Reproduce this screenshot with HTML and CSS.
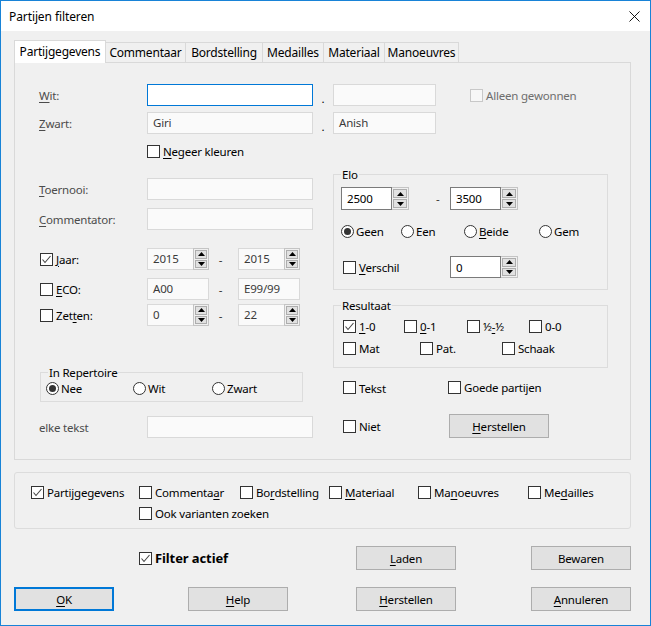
FILE: index.html
```html
<!DOCTYPE html>
<html lang="nl">
<head>
<meta charset="utf-8">
<title>Partijen filteren</title>
<link rel="stylesheet" href="styles.css">
</head>
<body>
<div class="window">
  <div class="titlebar">
    <span class="title">Partijen filteren</span>
    <svg class="close" width="12" height="12" viewBox="0 0 12 12"><path d="M0.5 0.5 L11.5 11.5 M11.5 0.5 L0.5 11.5" stroke="#000" stroke-width="1"/></svg>
  </div>
  <div class="body">
    <div class="tabs">
      <div class="tab active t1">Partijgegevens</div>
      <div class="tab t2">Commentaar</div>
      <div class="tab t3">Bordstelling</div>
      <div class="tab t4">Medailles</div>
      <div class="tab t5">Materiaal</div>
      <div class="tab t6">Manoeuvres</div>
    </div>
    <div class="panel">
      <div class="row r-wit">
        <span class="lbl"><u>W</u>it:</span>
        <div class="input focus"></div>
        <span class="dot">.</span>
        <div class="input short"></div>
        <span class="chk disabled alleen"><span class="box"></span><span class="txt">Alleen gewonnen</span></span>
      </div>
      <div class="row r-zwart">
        <span class="lbl"><u>Z</u>wart:</span>
        <div class="input">Giri</div>
        <span class="dot">.</span>
        <div class="input short">Anish</div>
      </div>
      <div class="row r-negeer">
        <span class="chk"><span class="box"></span><span class="txt"><u>N</u>egeer kleuren</span></span>
      </div>

      <div class="cols">
        <div class="col-left">
          <div class="row r-toernooi">
            <span class="lbl"><u>T</u>oernooi:</span>
            <div class="input"></div>
          </div>
          <div class="row r-comm">
            <span class="lbl"><u>C</u>ommentator:</span>
            <div class="input"></div>
          </div>
          <div class="row r-jaar">
            <span class="chk lblchk"><span class="box on"><svg viewBox="0 0 11 11"><path d="M1.5 5.5 L4 8.5 L9.5 2" fill="none" stroke="#444" stroke-width="1.1"/></svg></span><span class="txt"><u>J</u>aar:</span></span>
            <div class="spin light"><div class="edit">2015</div><div class="updown"><span class="b"><svg viewBox="0 0 7 4"><path d="M0 4 L3.5 0 L7 4Z"/></svg></span><span class="b"><svg viewBox="0 0 7 4"><path d="M0 0 L7 0 L3.5 4Z"/></svg></span></div></div>
            <span class="dash">-</span>
            <div class="spin light"><div class="edit">2015</div><div class="updown"><span class="b"><svg viewBox="0 0 7 4"><path d="M0 4 L3.5 0 L7 4Z"/></svg></span><span class="b"><svg viewBox="0 0 7 4"><path d="M0 0 L7 0 L3.5 4Z"/></svg></span></div></div>
          </div>
          <div class="row r-eco">
            <span class="chk lblchk"><span class="box"></span><span class="txt"><u>E</u>CO:</span></span>
            <div class="input small">A00</div>
            <span class="dash">-</span>
            <div class="input small">E99/99</div>
          </div>
          <div class="row r-zetten">
            <span class="chk lblchk"><span class="box"></span><span class="txt">Zet<u>t</u>en:</span></span>
            <div class="spin light"><div class="edit">0</div><div class="updown"><span class="b"><svg viewBox="0 0 7 4"><path d="M0 4 L3.5 0 L7 4Z"/></svg></span><span class="b"><svg viewBox="0 0 7 4"><path d="M0 0 L7 0 L3.5 4Z"/></svg></span></div></div>
            <span class="dash">-</span>
            <div class="spin light"><div class="edit">22</div><div class="updown"><span class="b"><svg viewBox="0 0 7 4"><path d="M0 4 L3.5 0 L7 4Z"/></svg></span><span class="b"><svg viewBox="0 0 7 4"><path d="M0 0 L7 0 L3.5 4Z"/></svg></span></div></div>
          </div>
          <div class="group repertoire">
            <span class="legend">In Repertoire</span>
            <span class="radio on r-nee"><span class="circle"></span><span class="txt">Nee</span></span>
            <span class="radio r-wit2"><span class="circle"></span><span class="txt">Wit</span></span>
            <span class="radio"><span class="circle"></span><span class="txt">Zwart</span></span>
          </div>
          <div class="row r-elke">
            <span class="lbl">elke tekst</span>
            <div class="input"></div>
          </div>
        </div>

        <div class="col-right">
          <div class="group elo">
            <span class="legend">Elo</span>
            <div class="grow g-spin">
              <div class="spin dark"><div class="edit">2500</div><div class="updown"><span class="b"><svg viewBox="0 0 7 4"><path d="M0 4 L3.5 0 L7 4Z"/></svg></span><span class="b"><svg viewBox="0 0 7 4"><path d="M0 0 L7 0 L3.5 4Z"/></svg></span></div></div>
              <span class="edash">-</span>
              <div class="spin dark"><div class="edit">3500</div><div class="updown"><span class="b"><svg viewBox="0 0 7 4"><path d="M0 4 L3.5 0 L7 4Z"/></svg></span><span class="b"><svg viewBox="0 0 7 4"><path d="M0 0 L7 0 L3.5 4Z"/></svg></span></div></div>
            </div>
            <div class="grow g-radio">
              <span class="radio on w60"><span class="circle"></span><span class="txt">Geen</span></span>
              <span class="radio w63"><span class="circle"></span><span class="txt">Een</span></span>
              <span class="radio w75"><span class="circle"></span><span class="txt"><u>B</u>eide</span></span>
              <span class="radio"><span class="circle"></span><span class="txt">Gem</span></span>
            </div>
            <div class="grow g-versch">
              <span class="chk w107"><span class="box"></span><span class="txt"><u>V</u>erschil</span></span>
              <div class="spin dark"><div class="edit">0</div><div class="updown"><span class="b"><svg viewBox="0 0 7 4"><path d="M0 4 L3.5 0 L7 4Z"/></svg></span><span class="b"><svg viewBox="0 0 7 4"><path d="M0 0 L7 0 L3.5 4Z"/></svg></span></div></div>
            </div>
          </div>

          <div class="group resultaat">
            <span class="legend">Resultaat</span>
            <div class="grow g-res1">
              <span class="chk w61"><span class="box on"><svg viewBox="0 0 11 11"><path d="M1.5 5.5 L4 8.5 L9.5 2" fill="none" stroke="#444" stroke-width="1.1"/></svg></span><span class="txt"><u>1</u>-0</span></span>
              <span class="chk w63"><span class="box"></span><span class="txt"><u>0</u>-1</span></span>
              <span class="chk w62"><span class="box"></span><span class="txt">½<u>-</u>½</span></span>
              <span class="chk"><span class="box"></span><span class="txt">0-0</span></span>
            </div>
            <div class="grow g-res2">
              <span class="chk w77"><span class="box"></span><span class="txt">Mat</span></span>
              <span class="chk w82"><span class="box"></span><span class="txt">Pat.</span></span>
              <span class="chk"><span class="box"></span><span class="txt">Schaak</span></span>
            </div>
          </div>

          <div class="grow g-tekst">
            <span class="chk w105 lower"><span class="box"></span><span class="txt">Tekst</span></span>
            <span class="chk"><span class="box"></span><span class="txt">Goede partijen</span></span>
          </div>
          <div class="grow g-niet">
            <span class="chk w106"><span class="box"></span><span class="txt">Niet</span></span>
            <span class="btn"><u>H</u>erstellen</span>
          </div>
        </div>
      </div>
    </div>

    <div class="search">
      <div class="srow">
        <span class="chk s108"><span class="box on"><svg viewBox="0 0 11 11"><path d="M1.5 5.5 L4 8.5 L9.5 2" fill="none" stroke="#444" stroke-width="1.1"/></svg></span><span class="txt">Partijgegevens</span></span>
        <span class="chk s101"><span class="box"></span><span class="txt">Commenta<u>a</u>r</span></span>
        <span class="chk s89"><span class="box"></span><span class="txt">Bo<u>r</u>dstelling</span></span>
        <span class="chk s89"><span class="box"></span><span class="txt"><u>M</u>ateriaal</span></span>
        <span class="chk s110"><span class="box"></span><span class="txt">Ma<u>n</u>oeuvres</span></span>
        <span class="chk"><span class="box"></span><span class="txt">Me<u>d</u>ailles</span></span>
      </div>
      <div class="srow srow2">
        <span class="chk"><span class="box"></span><span class="txt">Ook varianten zoeken</span></span>
      </div>
    </div>

    <div class="actions">
      <span class="chk filter"><span class="box on"><svg viewBox="0 0 11 11"><path d="M1.5 5.5 L4 8.5 L9.5 2" fill="none" stroke="#444" stroke-width="1.1"/></svg></span><span class="txt">Filter actief</span></span>
      <span class="btn a-laden"><u>L</u>aden</span>
      <span class="btn a-bewaren">Bewaren</span>
      <span class="btn default a-ok"><u>O</u>K</span>
      <span class="btn a-help"><u>H</u>elp</span>
      <span class="btn a-herst"><u>H</u>erstellen</span>
      <span class="btn a-annul"><u>A</u>nnuleren</span>
    </div>
  </div>
</div>
</body>
</html>
```

FILE: styles.css
```css
* { box-sizing: border-box; }
html, body { margin: 0; padding: 0; }
body {
  width: 651px;
  height: 626px;
  overflow: hidden;
  background: #f0f0f0;
  font-family: "Segoe UI", "Noto Sans", "Liberation Sans", sans-serif;
  font-size: 11.5px;
  letter-spacing: -0.2px;
  line-height: 15px;
  color: #000;
}
u { text-decoration: underline; text-underline-offset: 2px; text-decoration-thickness: 1px; }

.window {
  width: 651px;
  height: 626px;
  border: 1px solid #1883d7;
  background: #f0f0f0;
  display: flex;
  flex-direction: column;
}
.titlebar {
  height: 30px;
  flex: none;
  background: #fff;
  display: flex;
  align-items: center;
  justify-content: space-between;
  padding: 0 10px 0 8px;
}
.title { font-size: 12px; letter-spacing: -0.1px; }
.close { display: block; width: 11px; height: 11px; }

.body { padding: 9px 19px 0 13px; }

/* tabs */
.tabs { display: flex; align-items: flex-end; height: 22px; position: relative; z-index: 1; }
.tab {
  height: 20px;
  background: #f0f0f0;
  border: 1px solid #d9d9d9;
  border-left: none;
  border-bottom: none;
  text-align: center;
  padding-top: 2px;
  line-height: 15px;
  white-space: nowrap;
  font-size: 12px;
  letter-spacing: -0.2px;
}
.tab.active {
  height: 23px;
  margin-bottom: -1px;
  background: #fff;
  border: 1px solid #d9d9d9;
  border-bottom: none;
  padding-top: 3px;
}
.t1 { width: 92px; }
.t2 { width: 80px; }
.t3 { width: 77px; }
.t4 { width: 61px; }
.t5 { width: 61px; }
.t6 { width: 74px; }

.panel {
  height: 398px;
  border: 1px solid #d9d9d9;
  padding: 21px 0 0 24px;
}

.row { display: flex; align-items: center; height: 22px; }
.lbl { width: 108px; flex: none; color: #4b4b4b; }
.input {
  width: 166px;
  height: 22px;
  flex: none;
  background: #fafafa;
  border: 1px solid #d9d9d9;
  padding: 2px 0 0 5px;
  color: #3a3a3a;
}
.input.focus { border-color: #0078d7; background: #fff; }
.input.short { width: 103px; }
.input.small { width: 62px; }
.dot { width: 20px; flex: none; text-align: center; align-self: flex-end; color: #000; line-height: 14px; }

.r-zwart { margin-top: 6px; }
.r-negeer { margin-top: 11px; height: 13px; padding-left: 108px; }

/* checkbox */
.chk { display: inline-flex; align-items: center; flex: none; white-space: nowrap; }
.chk .box {
  width: 13px; height: 13px; flex: none;
  border: 1px solid #333;
  background: #fff;
  display: flex; align-items: center; justify-content: center;
}
.chk .box svg { width: 11px; height: 11px; display: block; }
.chk .txt { margin-left: 3px; }
.chk.disabled .box { border-color: #c8c8c8; background: #f7f7f7; }
.chk.disabled .txt { color: #6d6d6d; }
.alleen { margin-left: 34px; }

/* radio */
.radio { display: inline-flex; align-items: center; flex: none; white-space: nowrap; }
.radio .circle {
  width: 13px; height: 13px; border-radius: 50%;
  border: 1px solid #333; background: #fff; flex: none;
  display: flex; align-items: center; justify-content: center;
}
.radio.on .circle::after { content: ""; width: 7px; height: 7px; border-radius: 50%; background: #333; }
.radio .txt { margin-left: 2px; }

/* columns */
.cols { display: flex; gap: 20px; }
.col-left { width: 274px; flex: none; padding-top: 20px; }
.col-right { width: 275px; flex: none; padding-top: 16px; }

.r-comm { margin-top: 8px; }
.r-jaar { margin-top: 18px; }
.r-eco { margin-top: 8px; }
.r-zetten { margin-top: 4px; }
.lblchk { width: 108px; padding-left: 1px; }
.dash { width: 29px; flex: none; text-align: center; padding-right: 6px; color: #333; }

/* spinners */
.spin { display: flex; height: 22px; width: 62px; flex: none; }
.spin .edit {
  flex: 1;
  background: #fafafa;
  border: 1px solid #d9d9d9;
  border-right: none;
  padding: 2px 0 0 5px;
  color: #3a3a3a;
}
.spin .updown {
  width: 16px; flex: none;
  border: 1px solid #c4c4c4;
  padding: 1px;
  display: flex; flex-direction: column; gap: 1px;
  background: #f0f0f0;
}
.updown .b {
  flex: 1;
  border: 1px solid #adadad;
  background: #e1e1e1;
  display: flex; align-items: center; justify-content: center;
}
.updown .b svg { width: 7px; height: 4px; display: block; fill: #000; }
.spin.dark { width: 68px; height: 23px; }
.spin.dark .edit { border-color: #7a7a7a; border-right: 1px solid #7a7a7a; background: #fff; color: #000; padding-top: 3px; }
.spin.dark .updown { width: 17px; border-left: none; }

/* groups */
.group { position: relative; border: 1px solid #dcdcdc; }
.legend {
  position: absolute;
  top: -8px;
  left: 7px;
  padding: 0 1px;
  background: #f0f0f0;
  line-height: 15px;
}
.repertoire {
  margin-top: 46px;
  margin-left: 1px;
  width: 263px;
  height: 30px;
  display: flex;
  align-items: center;
  padding: 2px 0 0 5px;
}
.r-nee { width: 87px; }
.r-wit2 { width: 79px; }
.r-elke { margin-top: 14px; }

.elo { height: 116px; padding: 12px 0 0 7px; }
.grow { display: flex; align-items: center; }
.edash { width: 41px; padding-left: 27px; flex: none; color: #333; }
.g-radio { margin-top: 15px; height: 13px; }
.w60 { width: 60px; }
.w63 { width: 63px; }
.w75 { width: 75px; }
.g-versch { margin-top: 18px; height: 22px; }
.g-versch .spin { height: 22px; }
.w107 { width: 109px; padding-left: 2px; }

.resultaat { margin-top: 15px; height: 63px; padding: 14px 0 0 9px; }
.g-res1 { height: 13px; }
.g-res2 { height: 13px; margin-top: 9px; }
.w61 { width: 61px; }
.w62 { width: 62px; }
.w77 { width: 77px; }
.w82 { width: 82px; }

.g-tekst { margin-top: 12px; height: 15px; padding-left: 10px; }
.w105 { width: 105px; }
.lower .txt { position: relative; top: 1px; }
.g-niet { margin-top: 19px; height: 24px; padding-left: 10px; }
.w106 { width: 106px; }

/* buttons */
.btn {
  display: flex; align-items: center; justify-content: center;
  width: 100px; height: 24px;
  background: #e1e1e1;
  border: 1px solid #adadad;
  color: #000;
  white-space: nowrap;
}
.btn.default { border: 2px solid #0078d7; }

/* search area */
.search {
  margin-top: 12px;
  height: 57px;
  border: 1px solid #dcdcdc;
  border-radius: 3px;
  padding: 13px 0 0 16px;
}
.srow { display: flex; align-items: center; height: 13px; }
.srow2 { margin-top: 8px; padding-left: 108px; }
.s108 { width: 108px; }
.s101 { width: 101px; }
.s89 { width: 89px; }
.s110 { width: 110px; }

/* actions */
.actions {
  margin-top: 17px;
  display: grid;
  grid-template-columns: 100px 74px 100px 68px 100px 75px 100px;
  grid-template-rows: 24px 24px;
  row-gap: 17px;
}
.filter { grid-column: 2 / 5; grid-row: 1; padding-left: 25px; align-self: center; }
.filter .txt { font-weight: bold; font-size: 13px; letter-spacing: -0.1px; }
.a-laden { grid-column: 5; grid-row: 1; }
.a-bewaren { grid-column: 7; grid-row: 1; }
.a-ok { grid-column: 1; grid-row: 2; }
.a-help { grid-column: 3; grid-row: 2; }
.a-herst { grid-column: 5; grid-row: 2; }
.a-annul { grid-column: 7; grid-row: 2; }
```
